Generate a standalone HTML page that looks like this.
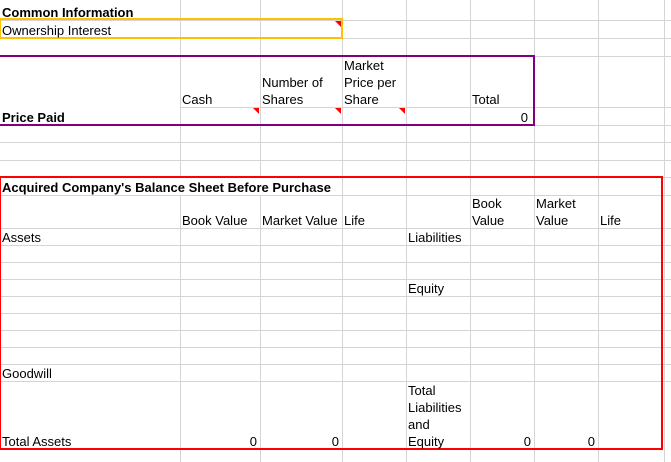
<!DOCTYPE html><html><head><style>
body{margin:0;width:671px;height:462px;overflow:hidden;background:#fff;position:relative;font-family:"Liberation Sans",Arial,sans-serif;font-size:13px;color:#000}
.c{position:absolute;display:flex;flex-direction:column;justify-content:flex-end;line-height:17px;white-space:nowrap;padding-bottom:0;transform:translateY(1px)}
.r{text-align:right}
b{font-weight:bold}
.t{position:absolute;width:0;height:0;border-top:6px solid #f00;border-left:6px solid transparent}
</style></head><body>
<svg width="671" height="462" style="position:absolute;left:0;top:0">
<g stroke="#d4d4d4" stroke-width="1">
<line x1="0" y1="20.5" x2="671" y2="20.5"/><line x1="0" y1="38.5" x2="671" y2="38.5"/>
<line x1="0" y1="56.5" x2="671" y2="56.5"/><line x1="180" y1="107.5" x2="671" y2="107.5"/>
<line x1="0" y1="125.5" x2="671" y2="125.5"/><line x1="0" y1="142.5" x2="671" y2="142.5"/>
<line x1="0" y1="160.5" x2="671" y2="160.5"/><line x1="0" y1="177.5" x2="671" y2="177.5"/>
<line x1="0" y1="195.5" x2="671" y2="195.5"/><line x1="0" y1="228.5" x2="671" y2="228.5"/>
<line x1="0" y1="245.5" x2="671" y2="245.5"/><line x1="0" y1="262.5" x2="671" y2="262.5"/>
<line x1="0" y1="279.5" x2="671" y2="279.5"/><line x1="0" y1="296.5" x2="671" y2="296.5"/>
<line x1="0" y1="313.5" x2="671" y2="313.5"/><line x1="0" y1="330.5" x2="671" y2="330.5"/>
<line x1="0" y1="347.5" x2="671" y2="347.5"/><line x1="0" y1="364.5" x2="671" y2="364.5"/>
<line x1="0" y1="381.5" x2="671" y2="381.5"/>
<line x1="180.5" y1="0" x2="180.5" y2="177"/><line x1="180.5" y1="195" x2="180.5" y2="462"/>
<line x1="260.5" y1="0" x2="260.5" y2="177"/><line x1="260.5" y1="195" x2="260.5" y2="462"/>
<line x1="342.5" y1="0" x2="342.5" y2="462"/><line x1="406.5" y1="0" x2="406.5" y2="462"/>
<line x1="470.5" y1="0" x2="470.5" y2="462"/><line x1="534.5" y1="0" x2="534.5" y2="462"/>
<line x1="598.5" y1="0" x2="598.5" y2="462"/><line x1="664.5" y1="0" x2="664.5" y2="462"/>
</g>
<rect x="0" y="19" width="342" height="19" fill="none" stroke="#ffc000" stroke-width="2"/>
<rect x="-2" y="56" width="536" height="69" fill="none" stroke="#800080" stroke-width="2"/>
<rect x="0" y="177" width="662" height="272" fill="none" stroke="#f00" stroke-width="2"/>
</svg>
<div class="t" style="left:335px;top:21px"></div>
<div class="t" style="left:253px;top:108px"></div>
<div class="t" style="left:335px;top:108px"></div>
<div class="t" style="left:399px;top:108px"></div>

<div class="c" style="left:2px;top:2px;height:18px"><b>Common Information</b></div>
<div class="c" style="left:2px;top:20px;height:18px">Ownership Interest</div>
<div class="c" style="left:182px;top:56px;height:51px">Cash</div>
<div class="c" style="left:262px;top:56px;height:51px">Number of<br>Shares</div>
<div class="c" style="left:344px;top:56px;height:51px">Market<br>Price per<br>Share</div>
<div class="c" style="left:472px;top:56px;height:51px">Total</div>
<div class="c" style="left:2px;top:107px;height:18px"><b>Price Paid</b></div>
<div class="c r" style="left:470px;top:107px;height:18px;width:58px">0</div>
<div class="c" style="left:2px;top:178px;height:17px"><b>Acquired Company's Balance Sheet Before Purchase</b></div>
<div class="c" style="left:182px;top:195px;height:33px">Book Value</div>
<div class="c" style="left:262px;top:195px;height:33px">Market Value</div>
<div class="c" style="left:344px;top:195px;height:33px">Life</div>
<div class="c" style="left:472px;top:195px;height:33px">Book<br>Value</div>
<div class="c" style="left:536px;top:195px;height:33px">Market<br>Value</div>
<div class="c" style="left:600px;top:195px;height:33px">Life</div>
<div class="c" style="left:2px;top:228px;height:17px">Assets</div>
<div class="c" style="left:408px;top:228px;height:17px">Liabilities</div>
<div class="c" style="left:408px;top:279px;height:17px">Equity</div>
<div class="c" style="left:2px;top:364px;height:17px">Goodwill</div>
<div class="c" style="left:2px;top:381px;height:68px">Total Assets</div>
<div class="c r" style="left:180px;top:381px;height:68px;width:77px">0</div>
<div class="c r" style="left:260px;top:381px;height:68px;width:79px">0</div>
<div class="c" style="left:408px;top:381px;height:68px">Total<br>Liabilities<br>and<br>Equity</div>
<div class="c r" style="left:470px;top:381px;height:68px;width:61px">0</div>
<div class="c r" style="left:534px;top:381px;height:68px;width:61px">0</div>
</body></html>
